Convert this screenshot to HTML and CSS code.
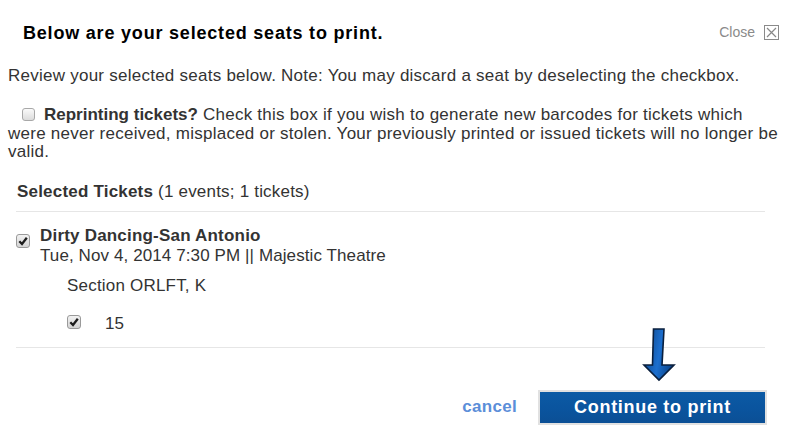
FILE: index.html
```html
<!DOCTYPE html>
<html>
<head>
<meta charset="utf-8">
<link rel="stylesheet" href="styles.css">
</head>
<body>
<div class="dialog">
  <div class="header">
    <h1 class="title">Below are your selected seats to print.</h1>
    <a class="close">Close <span class="close-box"><svg width="13" height="13" viewBox="0 0 13 13"><path d="M2 2 L11 11 M11 2 L2 11" stroke="#888" stroke-width="1.2" fill="none"/></svg></span></a>
  </div>
  <p class="intro">Review your selected seats below. Note: You may discard a seat by deselecting the checkbox.</p>
  <p class="reprint"><span class="cb cb-empty"></span><b>Reprinting tickets?</b> Check this box if you wish to generate new barcodes for tickets which<br>were never received, misplaced or stolen. Your previously printed or issued tickets will no longer be<br>valid.</p>
  <h2 class="selected"><b>Selected Tickets</b> (1 events; 1 tickets)</h2>
  <div class="tickets">
    <div class="event">
      <span class="cb cb-checked event-cb"><svg width="10" height="10" viewBox="0 0 10 10"><path d="M1.3 5.3 L4 8 L8.8 1.8" stroke="#1e1e1e" stroke-width="2.3" fill="none"/></svg></span>
      <div class="event-info">
        <div class="event-name">Dirty Dancing-San Antonio</div>
        <div class="event-date">Tue, Nov 4, 2014 7:30 PM || Majestic Theatre</div>
        <div class="section">Section ORLFT, K</div>
        <div class="seat">
          <span class="cb cb-checked"><svg width="10" height="10" viewBox="0 0 10 10"><path d="M1.3 5.3 L4 8 L8.8 1.8" stroke="#1e1e1e" stroke-width="2.3" fill="none"/></svg></span>
          <span class="seat-num">15</span>
        </div>
      </div>
    </div>
  </div>
  <div class="footer">
    <a class="cancel">cancel</a>
    <div class="btn-wrap">
      <svg class="arrow" width="34" height="56" viewBox="0 0 34 56">
        <defs>
          <linearGradient id="ag" x1="0" y1="0" x2="1" y2="0.3">
            <stop offset="0" stop-color="#0b3f7e"/>
            <stop offset="0.6" stop-color="#1c6fcf"/>
            <stop offset="1" stop-color="#0d4a92"/>
          </linearGradient>
        </defs>
        <path d="M11.5 2 L22 2 L20 38 L32 38 L17 53 L2 38 L10.5 38 Z" fill="url(#ag)" stroke="#0a1f3d" stroke-width="1.6" stroke-linejoin="miter"/>
      </svg>
      <button class="btn">Continue to print</button>
    </div>
  </div>
</div>
</body>
</html>
```
FILE: styles.css
```css
* { box-sizing: border-box; }
html, body { margin: 0; padding: 0; background: #fff; }
body {
  width: 792px;
  height: 434px;
  overflow: hidden;
  font-family: "Liberation Sans", Arial, sans-serif;
  color: #333;
}
.dialog { padding: 23px 12px 0 8px; }
.header {
  display: flex;
  justify-content: space-between;
  align-items: center;
  padding-left: 15px;
  padding-right: 1px;
}
.title {
  margin: 0;
  font-size: 18px;
  letter-spacing: 0.8px;
  line-height: 20px;
  font-weight: bold;
  color: #000;
}
.close {
  display: flex;
  align-items: center;
  gap: 9px;
  font-size: 14px;
  color: #8a8a8a;
  margin-top: -2px;
}
.close-box {
  display: inline-flex;
  align-items: center;
  justify-content: center;
  width: 15px;
  height: 15px;
  border: 1px solid #8a8a8a;
}
.intro {
  margin: 23px 0 0 0;
  font-size: 17px;
  letter-spacing: 0.25px;
  line-height: 19px;
}
.reprint {
  margin: 21px 0 0 0;
  font-size: 17px;
  letter-spacing: 0.25px;
  line-height: 18.5px;
  white-space: nowrap;
}
.reprint b { color: #333; letter-spacing: 0; }
.cb {
  display: inline-flex;
  align-items: center;
  justify-content: center;
  width: 14px;
  height: 14px;
  border: 1px solid #9a9a9a;
  border-radius: 3px;
  background: linear-gradient(#f2f2f2, #d4d4d4);
  vertical-align: -1px;
}
.cb-empty {
  margin-left: 14px;
  margin-right: 9px;
  width: 13px;
  height: 13px;
  border-color: #a8a8a8;
  background: linear-gradient(#fafafa, #dcdcdc);
}
.selected {
  margin: 20px 0 0 9px;
  font-size: 17px;
  letter-spacing: 0.2px;
  line-height: 19px;
  font-weight: normal;
  padding-bottom: 10px;
}
.tickets {
  margin-left: 8px;
  margin-right: 15px;
  border-top: 1px solid #e6e6e6;
  border-bottom: 1px solid #e6e6e6;
  padding: 14px 0 16px 0;
}
.event { display: flex; align-items: flex-start; }
.event-cb { margin-top: 8px; margin-right: 10px; }
.event-name { font-weight: bold; font-size: 17px; letter-spacing: 0.2px; line-height: 20px; }
.event-date { font-size: 17px; letter-spacing: 0.1px; line-height: 20px; }
.section { font-size: 17px; letter-spacing: 0.2px; line-height: 18px; margin: 11px 0 0 27px; }
.seat { display: flex; align-items: center; margin: 18px 0 0 27px; height: 18px; }
.seat-num { margin-left: 24px; font-size: 17px; margin-top: 5px; }
.footer {
  display: flex;
  justify-content: flex-end;
  align-items: center;
  gap: 21px;
  margin-top: 42px;
  padding-right: 13px;
}
.cancel {
  font-size: 17px;
  letter-spacing: 0.3px;
  font-weight: bold;
  color: #5b8ed9;
}
.btn-wrap { position: relative; }
.arrow { position: absolute; left: 104px; top: -63px; }
.btn {
  display: block;
  width: 229px;
  height: 35px;
  border: 2px solid #e1e1e1;
  background: linear-gradient(#0b5aa5, #0a549e 55%, #0b4f95);
  color: #fff;
  font-family: "Liberation Sans", Arial, sans-serif;
  font-weight: bold;
  font-size: 18px;
  letter-spacing: 0.7px;
  padding: 0;
  margin: 0;
}
```
